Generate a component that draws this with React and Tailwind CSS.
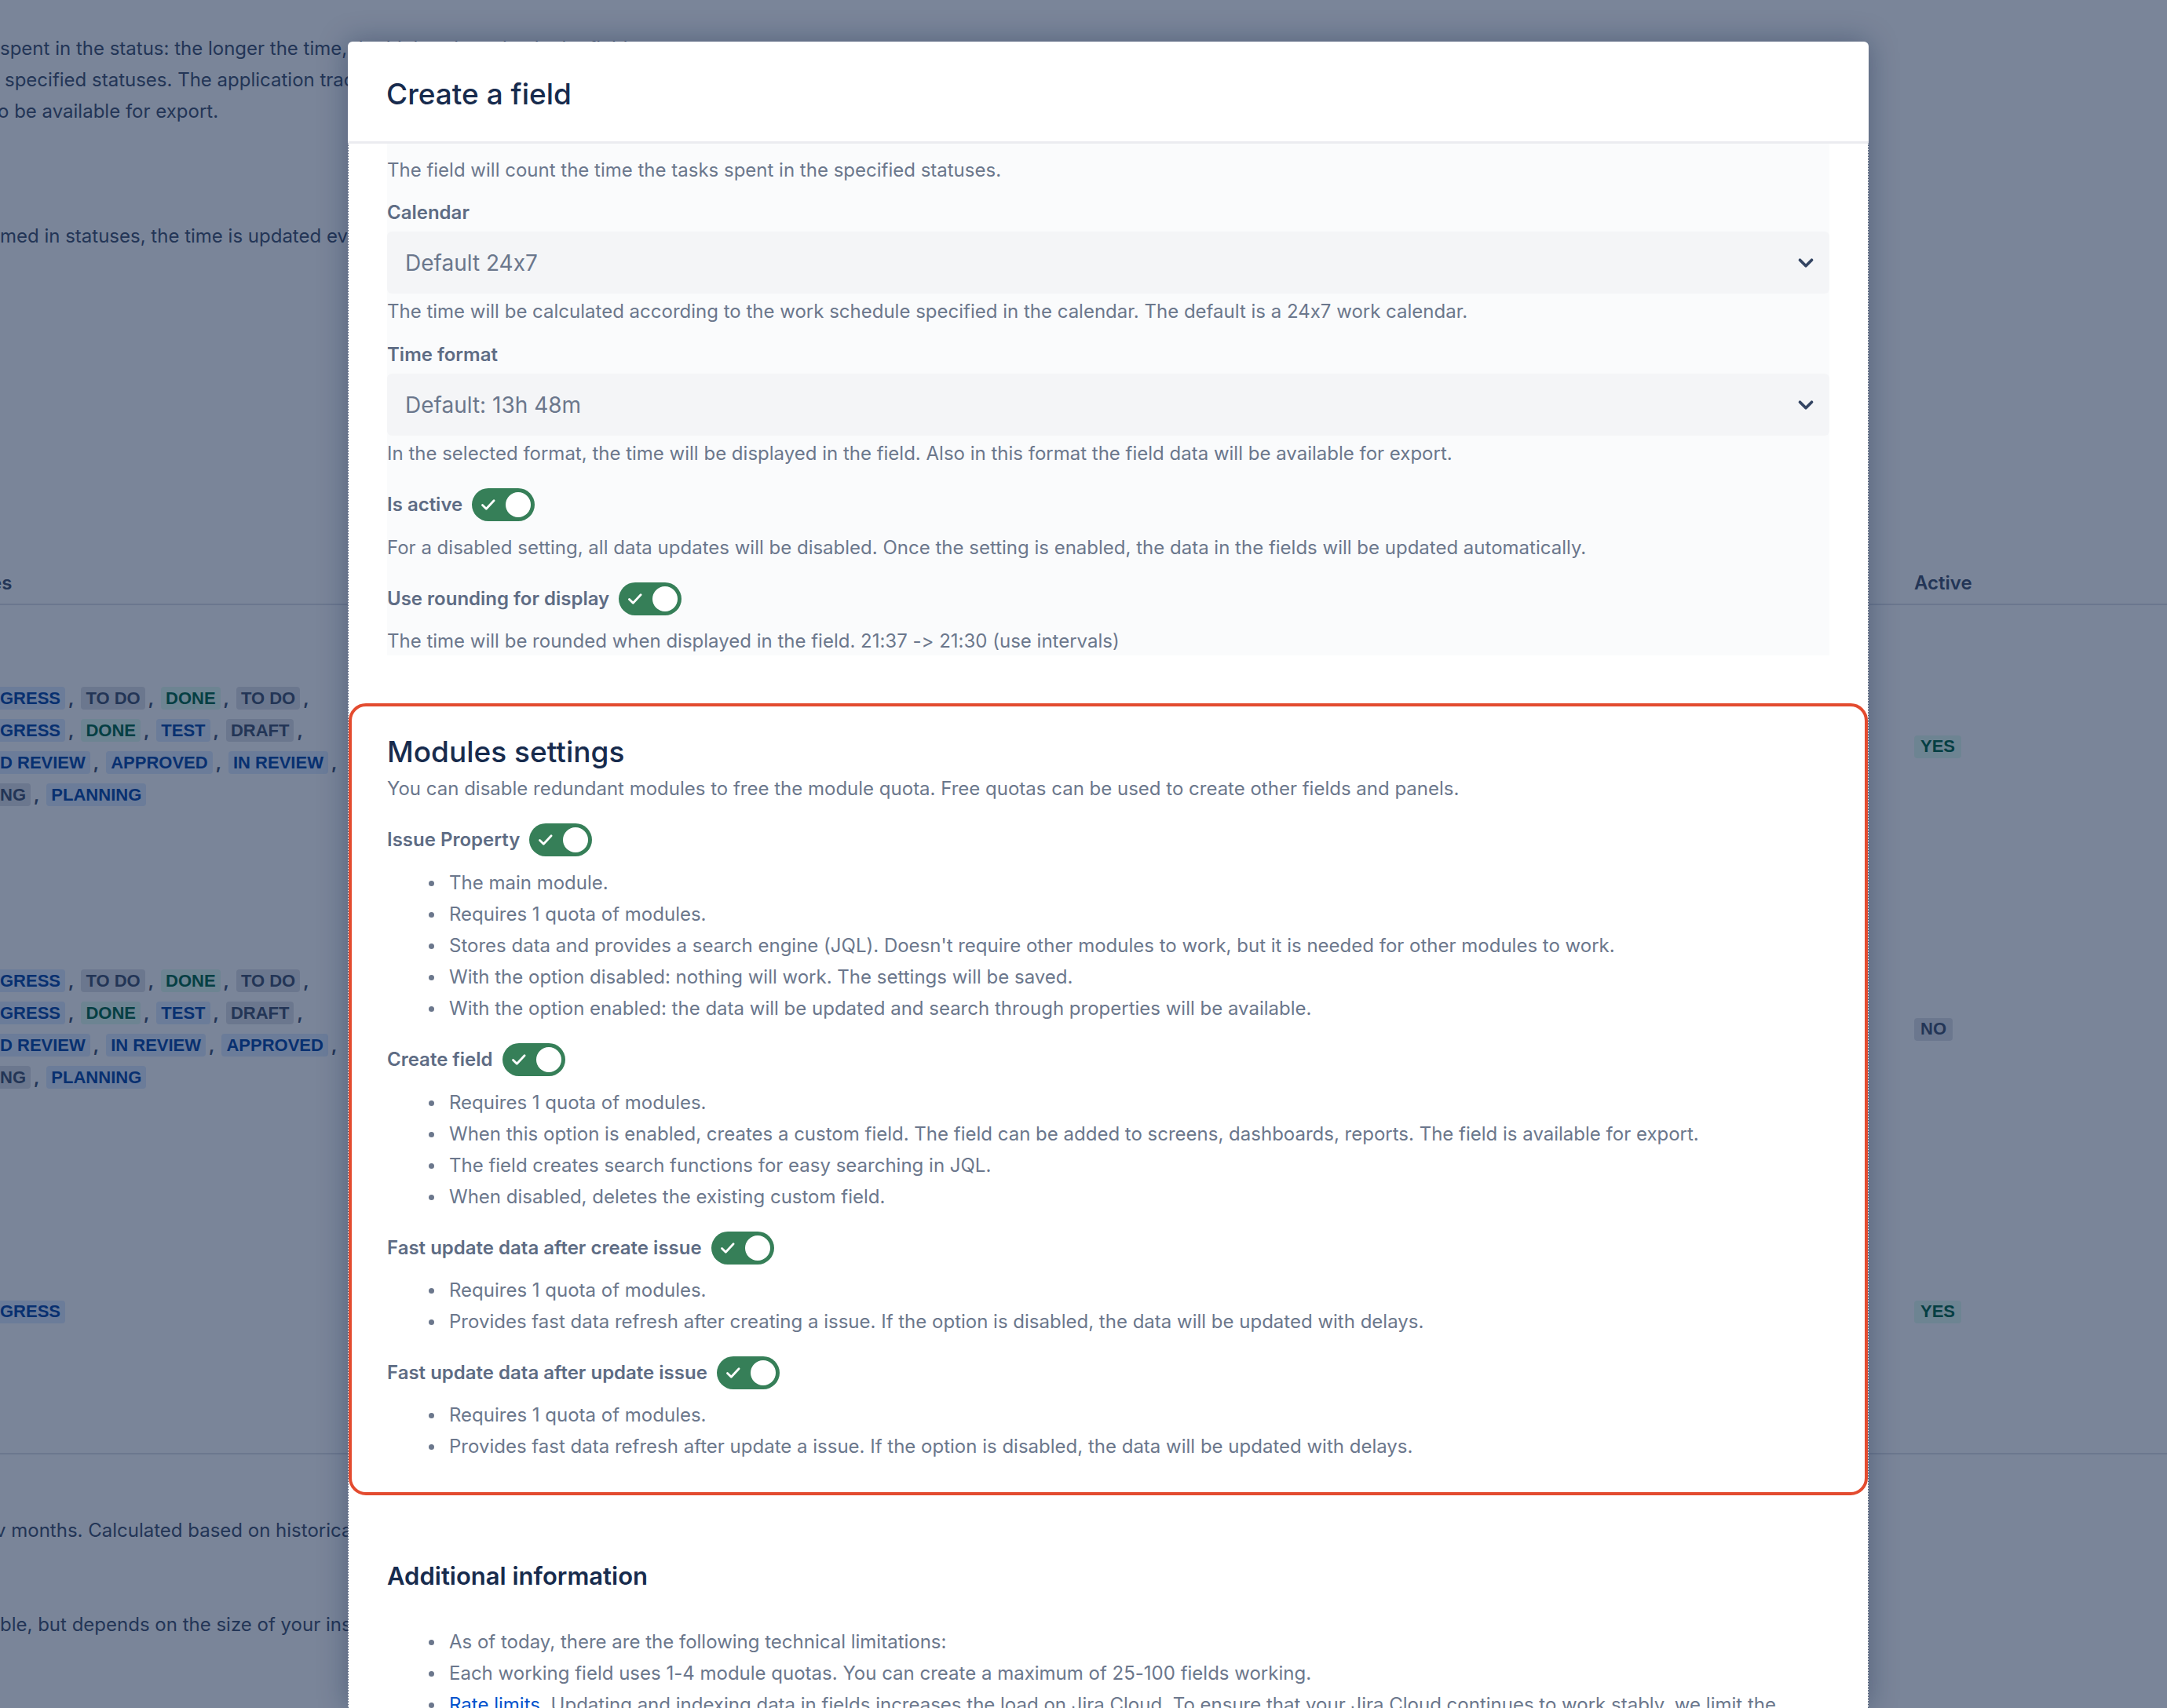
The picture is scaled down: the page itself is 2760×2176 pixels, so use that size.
import React from 'react';
import { ChevronDown } from 'lucide-react';

const BLUE = "bg-[#deebff] text-[#0747a6]";
const GRAY = "bg-[#dfe1e6] text-[#42526e]";
const GREEN = "bg-[#e3fcef] text-[#006644]";

const tagRows1 = [
    [["GRESS", BLUE], ["TO DO", GRAY], ["DONE", GREEN], ["TO DO", GRAY]],
    [["GRESS", BLUE], ["DONE", GREEN], ["TEST", BLUE], ["DRAFT", GRAY]],
    [["D REVIEW", BLUE], ["APPROVED", BLUE], ["IN REVIEW", BLUE]],
    [["NG", GRAY], ["PLANNING", BLUE]],
];

const tagRows2 = [
    [["GRESS", BLUE], ["TO DO", GRAY], ["DONE", GREEN], ["TO DO", GRAY]],
    [["GRESS", BLUE], ["DONE", GREEN], ["TEST", BLUE], ["DRAFT", GRAY]],
    [["D REVIEW", BLUE], ["IN REVIEW", BLUE], ["APPROVED", BLUE]],
    [["NG", GRAY], ["PLANNING", BLUE]],
];

const tagRows3 = [[["GRESS", BLUE]]];

function Tag({ label, color }) {
    return (
        <span className={"inline-flex h-[29px] items-center rounded-[4px] px-[6px] font-['Liberation_Sans',sans-serif] text-[22px] font-bold uppercase " + color}>
            {label}
        </span>
    );
}

function TagCell({ rows }) {
    return (
        <div className="-ml-[6px] flex flex-col">
            {rows.map((row, i) => (
                <div className="flex h-[41px] items-center" key={i}>
                    {row.map(([label, color], j) => (
                        <span className="flex items-center" key={j}>
                            <Tag label={label} color={color} />
                            {(j < row.length - 1 || i < rows.length - 1) && rows.length > 1 && (
                                <span className="ml-[4px] mr-[9px] text-[22px] font-bold text-[#42526e]">,</span>
                            )}
                        </span>
                    ))}
                </div>
            ))}
        </div>
    );
}

function Lozenge({ label, color }) {
    return (
        <span className={"inline-flex h-[29px] items-center rounded-[4px] px-[8px] font-['Liberation_Sans',sans-serif] text-[22px] font-bold " + color}>
            {label}
        </span>
    );
}

function BackgroundPage() {
    return (
        <div className="text-[24px] leading-[40px] text-[#42526e]">
            <div className="whitespace-nowrap pt-[42px]">
                <p>spent in the status: the longer the time, the higher the value in the field.</p>
                <p className="pl-[6px]">specified statuses. The application tracks the time spent in the statuses.</p>
                <p className="-ml-[3px]">o be available for export.</p>
                <p className="mt-[119px]">med in statuses, the time is updated every few minutes after the change.</p>
            </div>

            <div className="mt-[402px] grid grid-cols-[1fr_322px] border-b-2 border-[#dfe1e6] pb-[6px] font-semibold">
                <div className="-ml-[12px]">es</div>
                <div>Active</div>
            </div>

            <div className="grid grid-cols-[1fr_322px]">
                <div className="flex h-[360px] items-center"><TagCell rows={tagRows1} /></div>
                <div className="flex h-[360px] items-center"><Lozenge label="YES" color={GREEN} /></div>
                <div className="flex h-[360px] items-center"><TagCell rows={tagRows2} /></div>
                <div className="flex h-[360px] items-center"><Lozenge label="NO" color={GRAY} /></div>
                <div className="flex h-[360px] items-center"><TagCell rows={tagRows3} /></div>
                <div className="flex h-[360px] items-center"><Lozenge label="YES" color={GREEN} /></div>
            </div>

            <div className="border-t-2 border-[#dfe1e6] whitespace-nowrap">
                <p className="-ml-[6px] mt-[77px]">v months. Calculated based on historical data of the issues.</p>
                <p className="mt-[80px]">ble, but depends on the size of your instance and the number of issues.</p>
            </div>
        </div>
    );
}

function Toggle() {
    return (
        <span className="flex h-[42px] w-[80px] items-center justify-between rounded-full bg-[#367f58] pl-[9px] pr-[5px]">
            <svg width="24" height="24" viewBox="0 0 24 24">
                <path d="M4.5 12.5l4.8 4.8 9.8-10.6" stroke="white" strokeWidth="2.8" fill="none" strokeLinecap="round" strokeLinejoin="round" />
            </svg>
            <span className="h-[32px] w-[32px] rounded-full bg-white" />
        </span>
    );
}

function ToggleRow({ label, className }) {
    return (
        <div className={"flex h-[40px] items-center gap-[12px] " + (className || "")}>
            <span className="font-semibold text-[#5e6c84]">{label}</span>
            <Toggle />
        </div>
    );
}

function Select({ value, className }) {
    return (
        <div className={"flex h-[79px] items-center justify-between rounded-[6px] bg-[#f4f5f7] pl-[23px] pr-[15px] " + (className || "")}>
            <span className="text-[28px] text-[#6b778c]">{value}</span>
            <ChevronDown size={30} strokeWidth={3} color="#344563" />
        </div>
    );
}

function Bullets({ items, className }) {
    return (
        <ul className={"flex flex-col gap-[4px] pl-[53px] " + (className || "")}>
            {items.map((item, i) => (
                <li className="flex items-center gap-[19px] leading-[36px]" key={i}>
                    <span className="h-[7px] w-[7px] shrink-0 rounded-full bg-[#6b778c]" />
                    <span>{item}</span>
                </li>
            ))}
        </ul>
    );
}

function Modal() {
    return (
        <div className="absolute bottom-0 left-[443px] top-[53px] flex w-[1937px] flex-col rounded-t-[6px] bg-white shadow-[0_0_36px_rgba(9,30,66,0.35)]">
            <div className="flex h-[130px] shrink-0 items-center border-b-[3px] border-[#ebecf0] px-[49px] pt-[6px]">
                <h1 className="text-[37px] font-medium text-[#172b4d]">Create a field</h1>
            </div>

            <div className="flex-1 overflow-hidden border-x border-dotted border-[#42526e] text-[24px] leading-[36px] text-[#6b778c]">
                <div className="mx-[49px] bg-[#fafbfc] pt-[16px]">
                    <p>The field will count the time the tasks spent in the specified statuses.</p>
                    <p className="mt-[18px] font-semibold text-[#5e6c84]">Calendar</p>
                    <Select value="Default 24x7" className="mt-[6px]" />
                    <p className="mt-[5px]">The time will be calculated according to the work schedule specified in the calendar. The default is a 24x7 work calendar.</p>
                    <p className="mt-[19px] font-semibold text-[#5e6c84]">Time format</p>
                    <Select value="Default: 13h 48m" className="mt-[6px]" />
                    <p className="mt-[5px]">In the selected format, the time will be displayed in the field. Also in this format the field data will be available for export.</p>
                    <ToggleRow label="Is active" className="mt-[27px]" />
                    <p className="mt-[17px]">For a disabled setting, all data updates will be disabled. Once the setting is enabled, the data in the fields will be updated automatically.</p>
                    <ToggleRow label="Use rounding for display" className="mt-[27px]" />
                    <p className="mt-[16px]">The time will be rounded when displayed in the field. 21:37 -&gt; 21:30 (use intervals)</p>
                </div>

                <div className="mt-[61px] rounded-[22px] border-[4px] border-[#e34b2f] px-[45px] pb-[40px] pt-[35px]">
                    <h2 className="text-[37px] font-medium leading-[46px] text-[#172b4d]">Modules settings</h2>
                    <p className="mt-[6px]">You can disable redundant modules to free the module quota. Free quotas can be used to create other fields and panels.</p>

                    <ToggleRow label="Issue Property" className="mt-[27px]" />
                    <Bullets className="mt-[17px]" items={[
                        "The main module.",
                        "Requires 1 quota of modules.",
                        "Stores data and provides a search engine (JQL). Doesn't require other modules to work, but it is needed for other modules to work.",
                        "With the option disabled: nothing will work. The settings will be saved.",
                        "With the option enabled: the data will be updated and search through properties will be available.",
                    ]} />

                    <ToggleRow label="Create field" className="mt-[27px]" />
                    <Bullets className="mt-[17px]" items={[
                        "Requires 1 quota of modules.",
                        "When this option is enabled, creates a custom field. The field can be added to screens, dashboards, reports. The field is available for export.",
                        "The field creates search functions for easy searching in JQL.",
                        "When disabled, deletes the existing custom field.",
                    ]} />

                    <ToggleRow label="Fast update data after create issue" className="mt-[27px]" />
                    <Bullets className="mt-[16px]" items={[
                        "Requires 1 quota of modules.",
                        "Provides fast data refresh after creating a issue. If the option is disabled, the data will be updated with delays.",
                    ]} />

                    <ToggleRow label="Fast update data after update issue" className="mt-[27px]" />
                    <Bullets className="mt-[16px]" items={[
                        "Requires 1 quota of modules.",
                        "Provides fast data refresh after update a issue. If the option is disabled, the data will be updated with delays.",
                    ]} />
                </div>

                <div className="mt-[83px] px-[49px]">
                    <h2 className="text-[31px] font-semibold leading-[40px] text-[#172b4d]">Additional information</h2>
                    <Bullets className="mt-[46px]" items={[
                        "As of today, there are the following technical limitations:",
                        "Each working field uses 1-4 module quotas. You can create a maximum of 25-100 fields working.",
                        <span key="r"><a href="#" className="text-[#0052cc] underline">Rate limits</a>. Updating and indexing data in fields increases the load on Jira Cloud. To ensure that your Jira Cloud continues to work stably, we limit the</span>,
                    ]} />
                </div>
            </div>
        </div>
    );
}

function App() {
    return (
        <div className="relative h-[2176px] w-[2760px] overflow-hidden bg-white font-['Inter',sans-serif] [font-variant-ligatures:no-contextual]">
            <BackgroundPage />
            <div className="absolute inset-0 bg-[rgba(9,30,66,0.54)]" />
            <Modal />
        </div>
    );
}

export default App;
